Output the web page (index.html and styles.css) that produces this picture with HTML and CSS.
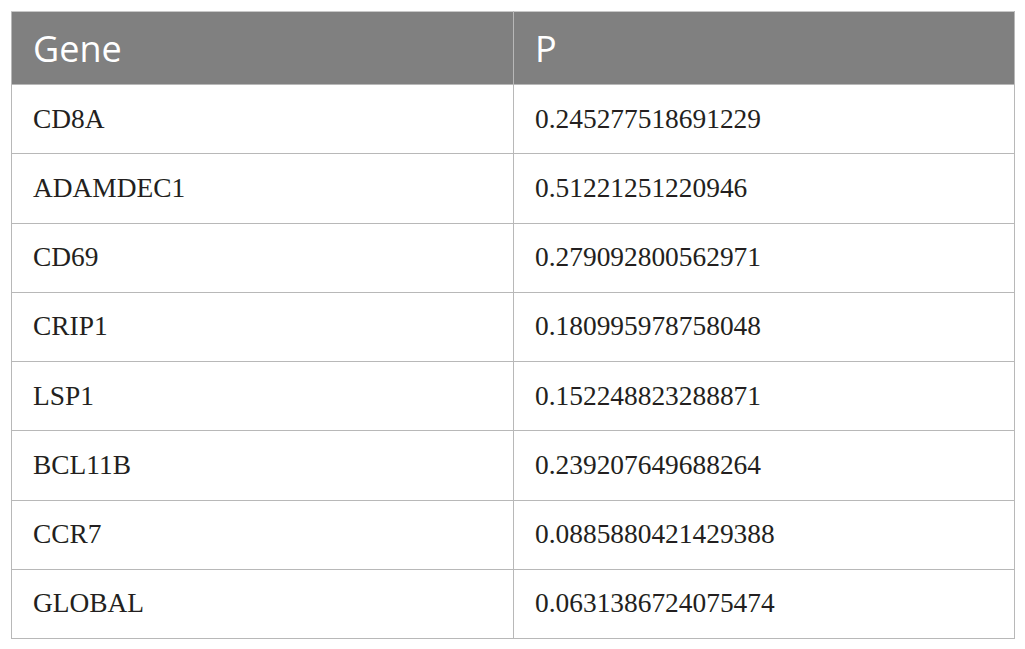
FILE: index.html
```html
<!DOCTYPE html>
<html>
<head>
<meta charset="utf-8">
<link rel="stylesheet" href="styles.css">
</head>
<body>
<table class="data">
  <thead>
    <tr><th class="c1">Gene</th><th>P</th></tr>
  </thead>
  <tbody>
    <tr><td>CD8A</td><td>0.245277518691229</td></tr>
    <tr><td>ADAMDEC1</td><td>0.51221251220946</td></tr>
    <tr><td>CD69</td><td>0.279092800562971</td></tr>
    <tr><td>CRIP1</td><td>0.180995978758048</td></tr>
    <tr><td>LSP1</td><td>0.152248823288871</td></tr>
    <tr><td>BCL11B</td><td>0.239207649688264</td></tr>
    <tr><td>CCR7</td><td>0.0885880421429388</td></tr>
    <tr><td>GLOBAL</td><td>0.0631386724075474</td></tr>
  </tbody>
</table>
</body>
</html>
```

FILE: styles.css
```css
html, body {
  margin: 0;
  padding: 0;
  background: #ffffff;
}
body {
  padding: 11px 0 0 11px;
}
.data {
  border-collapse: collapse;
  width: 1004px;
  table-layout: fixed;
}
.data th, .data td {
  border: 1px solid #b8b8b8;
  text-align: left;
  vertical-align: middle;
  padding: 0 0 0 21px;
}
.data th {
  background: #808080;
  color: #ffffff;
  font-family: "Open Sans", "Liberation Sans", sans-serif;
  font-weight: 400;
  font-size: 36px;
  height: 72px;
  border-top-color: #c8c8c8;
}
.data th.c1 {
  width: 480px;
}
.data td {
  color: #231f20;
  font-family: "Liberation Serif", "Times New Roman", serif;
  font-size: 27.4px;
  height: 68.25px;
}
```
